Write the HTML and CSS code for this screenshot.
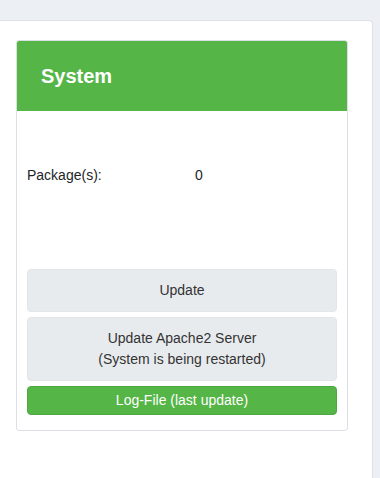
FILE: index.html
```html
<!DOCTYPE html>
<html lang="en">
<head>
  <meta charset="UTF-8">
  <meta name="viewport" content="width=device-width, initial-scale=1.0">
  <title>System</title>
  <link rel="stylesheet" href="styles.css">
</head>
<body>
  <div class="panel">
    <div class="card">
      <div class="card-header">System</div>
      <div class="card-body">
        <table class="info">
          <tr>
            <td class="label">Package(s):</td>
            <td>0</td>
          </tr>
        </table>
        <button class="btn">Update</button>
        <button class="btn">Update Apache2 Server<br>(System is being restarted)</button>
        <button class="btn btn-green btn-sm">Log-File (last update)</button>
      </div>
    </div>
  </div>
</body>
</html>
```

FILE: styles.css
```css
body {
  font-family: 'Liberation Sans', Arial, sans-serif;
  background: #eceff3;
  margin: 0;
  min-height: 100vh;
  font-size: 14px;
  line-height: 1.5;
  color: #212529;
}
.panel {
  width: 332px;
  margin-top: 20px;
  min-height: 460px;
  background: #fff;
  border: 1px solid #dde1e6;
  border-left: none;
  border-bottom: none;
  border-radius: 0 4px 0 0;
  padding: 19px 24px 0 16px;
}
.card {
  border: 1px solid #dcdfe3;
  border-radius: 3px;
  overflow: hidden;
}
.card-header {
  background: #55b546;
  color: #fff;
  font-size: 20px;
  font-weight: 700;
  line-height: 22px;
  padding: 24px;
}
.card-body {
  padding: 10px;
}
.info {
  border-collapse: collapse;
  margin: 44px 0 83px 0;
}
.info td {
  padding: 0;
}
.info .label {
  width: 168px;
}
.btn {
  display: block;
  width: 100%;
  font-family: inherit;
  font-size: 14px;
  line-height: 21px;
  color: #333;
  background: #e8ebee;
  border: 1px solid #e3e6e9;
  border-radius: 4px;
  padding: 10px;
  margin-bottom: 5px;
}
.btn-green {
  background: #55b546;
  border-color: #4ea841;
  color: #fff;
}
.btn-sm {
  padding: 3px 10px;
}
```
